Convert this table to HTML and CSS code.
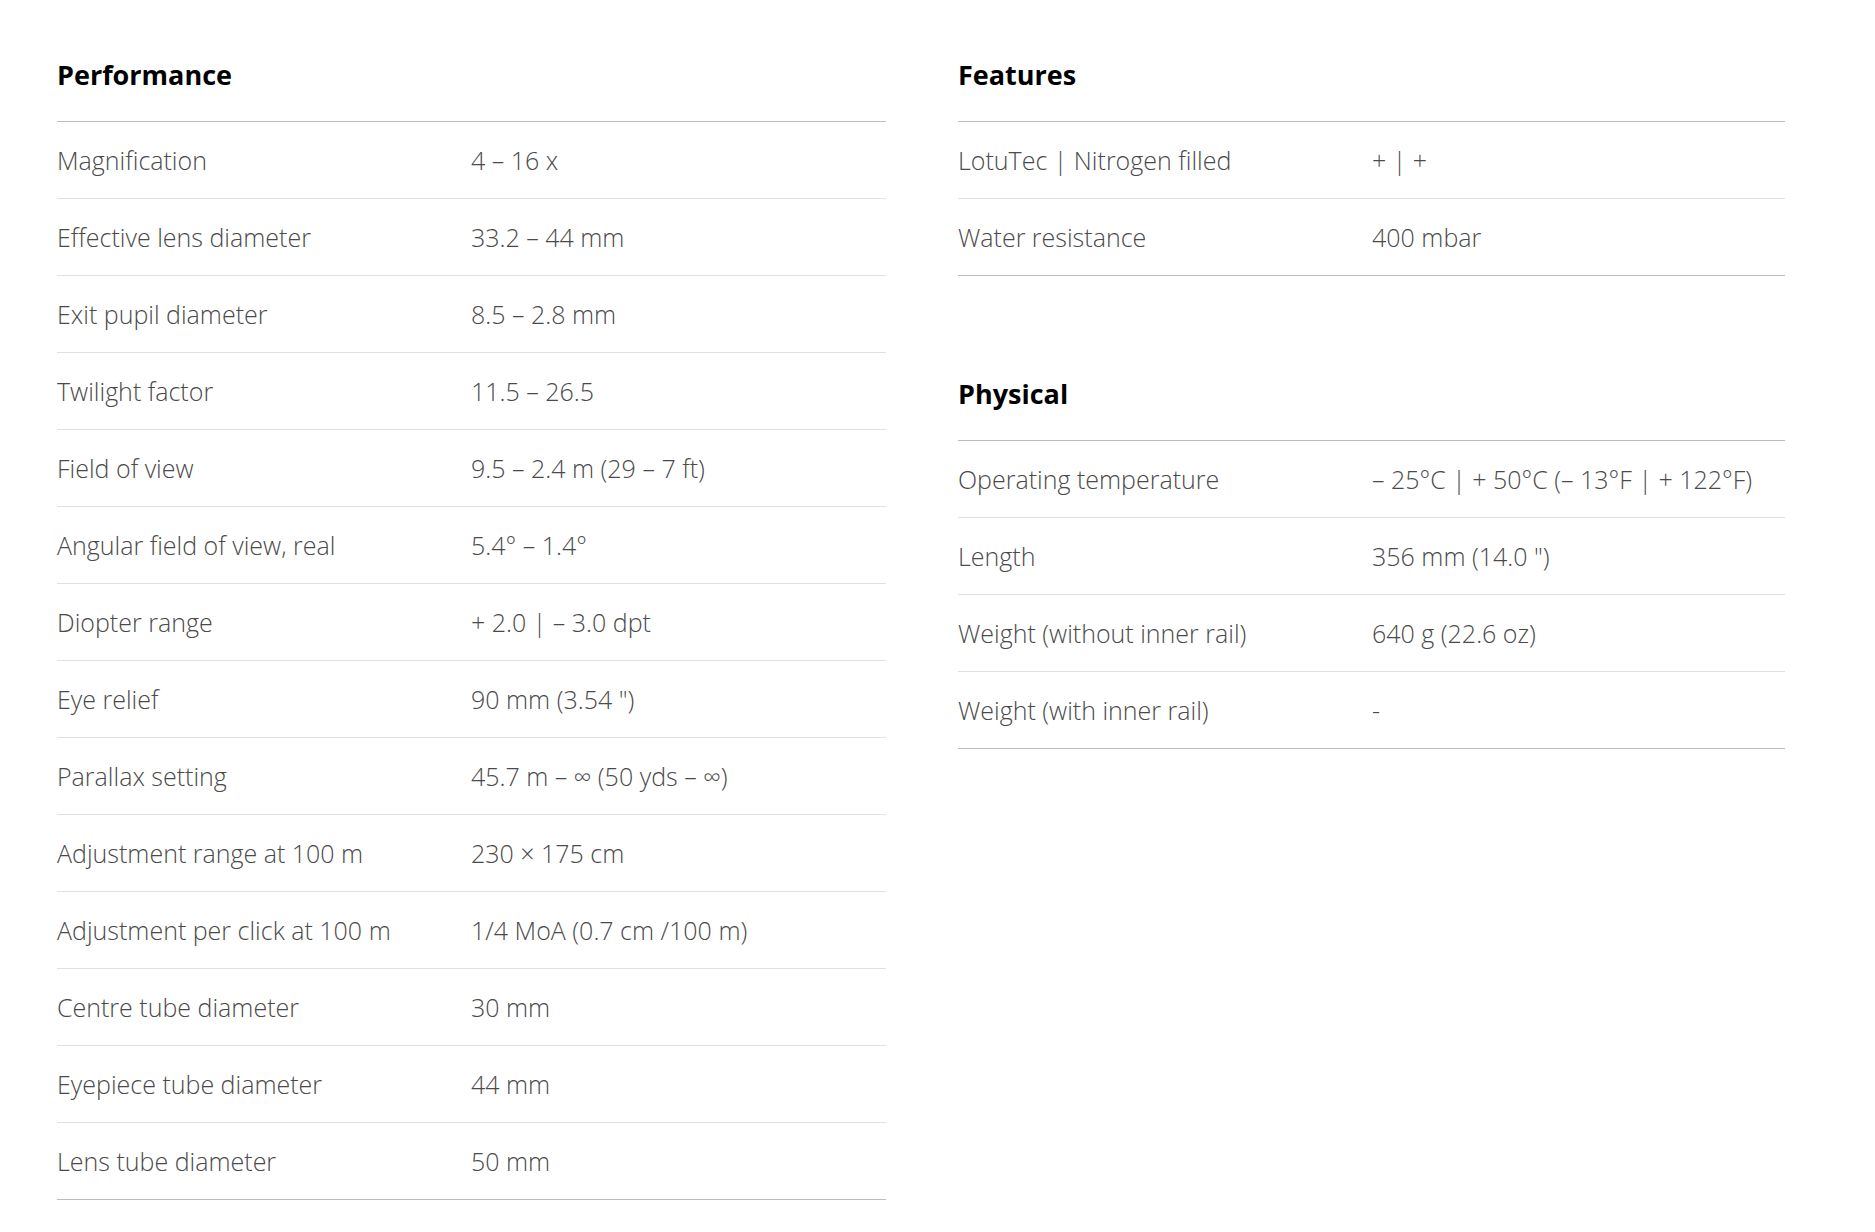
FILE: index.html
```html
<!DOCTYPE html>
<html lang="en">
<head>
<meta charset="utf-8">
<title>Specifications</title>
<link rel="stylesheet" href="styles.css">
</head>
<body>
<div class="specs">
  <div class="col">
    <section class="group">
      <h2 class="group-title">Performance</h2>
      <dl class="table">
        <div class="row"><dt>Magnification</dt><dd>4 – 16 x</dd></div>
        <div class="row"><dt>Effective lens diameter</dt><dd>33.2 – 44 mm</dd></div>
        <div class="row"><dt>Exit pupil diameter</dt><dd>8.5 – 2.8 mm</dd></div>
        <div class="row"><dt>Twilight factor</dt><dd>11.5 – 26.5</dd></div>
        <div class="row"><dt>Field of view</dt><dd>9.5 – 2.4 m (29 – 7 ft)</dd></div>
        <div class="row"><dt>Angular field of view, real</dt><dd>5.4° – 1.4°</dd></div>
        <div class="row"><dt>Diopter range</dt><dd>+ 2.0 | – 3.0 dpt</dd></div>
        <div class="row"><dt>Eye relief</dt><dd>90 mm (3.54 ")</dd></div>
        <div class="row"><dt>Parallax setting</dt><dd>45.7 m – ∞ (50 yds – ∞)</dd></div>
        <div class="row"><dt>Adjustment range at 100 m</dt><dd>230 × 175 cm</dd></div>
        <div class="row"><dt>Adjustment per click at 100 m</dt><dd>1/4 MoA (0.7 cm /100 m)</dd></div>
        <div class="row"><dt>Centre tube diameter</dt><dd>30 mm</dd></div>
        <div class="row"><dt>Eyepiece tube diameter</dt><dd>44 mm</dd></div>
        <div class="row"><dt>Lens tube diameter</dt><dd>50 mm</dd></div>
      </dl>
    </section>
  </div>
  <div class="col">
    <section class="group">
      <h2 class="group-title">Features</h2>
      <dl class="table">
        <div class="row"><dt>LotuTec | Nitrogen filled</dt><dd>+ | +</dd></div>
        <div class="row"><dt>Water resistance</dt><dd>400 mbar</dd></div>
      </dl>
    </section>
    <section class="group group-next">
      <h2 class="group-title">Physical</h2>
      <dl class="table">
        <div class="row"><dt>Operating temperature</dt><dd>– 25°C | + 50°C (– 13°F | + 122°F)</dd></div>
        <div class="row"><dt>Length</dt><dd>356 mm (14.0 ")</dd></div>
        <div class="row"><dt>Weight (without inner rail)</dt><dd>640 g (22.6 oz)</dd></div>
        <div class="row"><dt>Weight (with inner rail)</dt><dd>-</dd></div>
      </dl>
    </section>
  </div>
</div>
</body>
</html>
```
FILE: styles.css
```css
html, body {
  margin: 0;
  padding: 0;
  background: #ffffff;
}

body {
  font-family: "Open Sans", "Segoe UI", "Liberation Sans", sans-serif;
  color: #4d4d4d;
}

.specs {
  display: grid;
  grid-template-columns: 829px 827px;
  column-gap: 72px;
  padding: 57px 0 0 57px;
}

.group-next {
  margin-top: 100px;
}

.group-title {
  margin: 0;
  padding: 0 0 28px;
  font-size: 27px;
  line-height: 36px;
  font-weight: 700;
  color: #000000;
}

.table {
  margin: 0;
  border-top: 1px solid #bcbcbc;
}

.row {
  display: grid;
  grid-template-columns: 414px 1fr;
  align-items: center;
  height: 76px;
  border-bottom: 1px solid #e1e1e1;
}

.row:last-child {
  border-bottom-color: #bcbcbc;
}

.row dt,
.row dd {
  margin: 0 0 1px;
  font-size: 25px;
  font-weight: 300;
  line-height: 32px;
  color: #4a4a4a;
}
```
